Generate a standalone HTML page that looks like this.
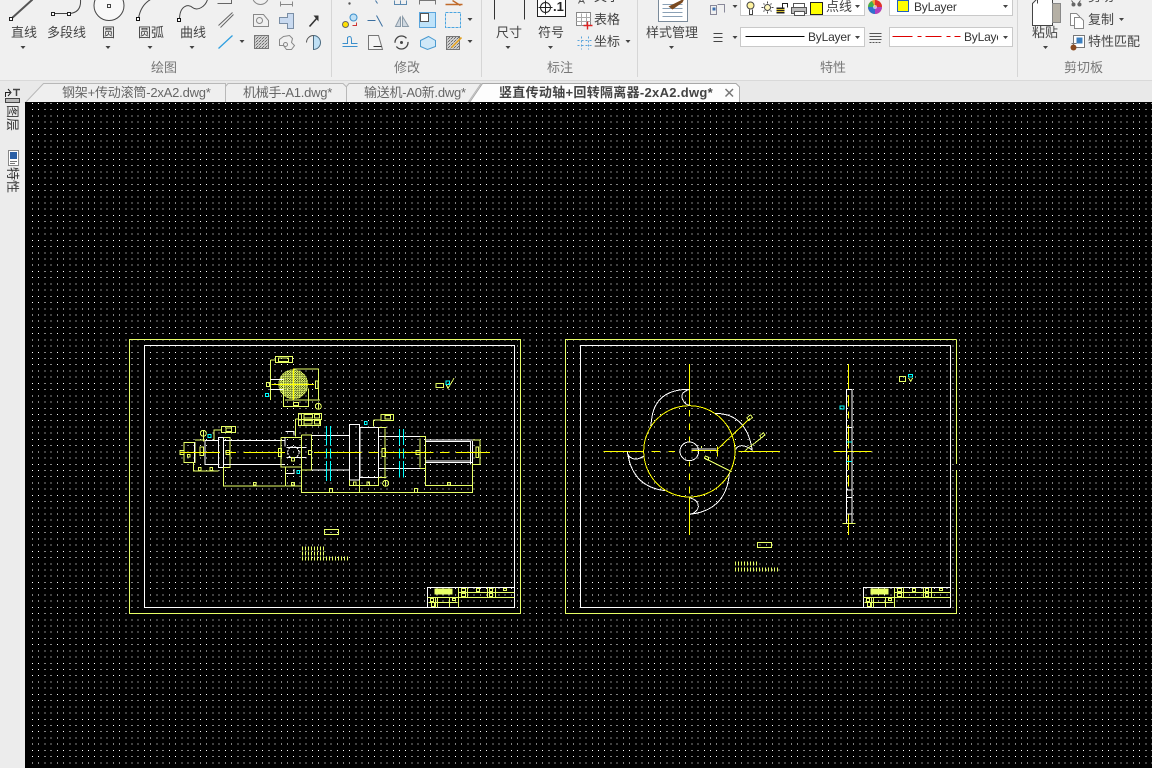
<!DOCTYPE html>
<html lang="zh"><head><meta charset="utf-8"><title>CAD</title>
<style>
html,body{margin:0;padding:0;width:1152px;height:768px;overflow:hidden;background:#f0f0f0}
body{position:relative;font-family:"Liberation Sans","Noto Sans CJK SC",sans-serif}
.t{position:absolute;white-space:nowrap;font-size:13px;line-height:16px;color:#444;z-index:5}
.s{color:#777}
.l{position:absolute;top:0;left:0}
.c{position:absolute;background:#fff;border:1px solid #c9c9c9;box-sizing:border-box}
.sep{position:absolute;top:0;width:1px;height:77px;background:#d6d6d6}
.y{position:absolute;white-space:nowrap;font-size:13px;line-height:14px;color:#333;transform-origin:0 0;transform:rotate(90deg)}
</style></head><body>
<div style="position:absolute;left:0;top:77px;width:1152px;height:3px;background:#f0f0f0;border-bottom:1px solid #d9d9d9"></div>
<div style="position:absolute;left:0;top:81px;width:1152px;height:22px;background:#e9e9e9"></div>
<div style="position:absolute;left:0;top:103px;width:25px;height:665px;background:#ececec"></div>
<div class="sep" style="left:331px"></div><div class="sep" style="left:481px"></div><div class="sep" style="left:637px"></div><div class="sep" style="left:1017px"></div>

<!-- combos -->
<div class="c" style="left:740px;top:-4px;width:125px;height:20px"></div>
<div class="c" style="left:889px;top:-4px;width:124px;height:20px"></div>
<div class="c" style="left:740px;top:27px;width:125px;height:20px"></div>
<div class="c" style="left:889px;top:27px;width:124px;height:20px"></div>

<svg class="l" width="1152" height="768" viewBox="0 0 1152 768" style="z-index:1">
<defs>
<pattern id="h" width="7" height="7" patternUnits="userSpaceOnUse"><path d="M-1 8L8 -1" stroke="#e8ff66" stroke-width="4.5"/></pattern>
<pattern id="g" width="3" height="3" patternUnits="userSpaceOnUse"><path d="M0 3L3 0" stroke="#666" stroke-width="1"/></pattern>
<g id="r1"><line x1="32" x2="1152" y1="0.5" y2="0.5" stroke="#fff" stroke-width="1" stroke-dasharray="1 5.22" shape-rendering="crispEdges"/></g>
<g id="r4"><use href="#r1"/><use href="#r1" y="6.22"/><use href="#r1" y="12.44"/><use href="#r1" y="18.66"/></g>
<g id="r16"><use href="#r4"/><use href="#r4" y="24.88"/><use href="#r4" y="49.76"/><use href="#r4" y="74.64"/></g>
<g id="r64"><use href="#r16"/><use href="#r16" y="99.52"/><use href="#r16" y="199.04"/><use href="#r16" y="298.56"/></g>
<g id="tb" fill="none" shape-rendering="crispEdges">
<path d="M0 20V0H87" stroke="#fff"/>
<path d="M31 5H87M0 10H87M31 0V20M40 0V10M60 0V10M68 0V10M1 15H30M8 10V20M10 10V20M22 10V20" stroke="#e8ff66"/>
<rect x="34" y="1" width="4" height="3" stroke="#e8ff66"/><rect x="34" y="6" width="4" height="3" stroke="#e8ff66"/>
<rect x="49" y="1" width="3" height="3" stroke="#e8ff66"/><rect x="62" y="1" width="3" height="3" stroke="#e8ff66"/><rect x="62" y="6" width="3" height="3" stroke="#e8ff66"/><rect x="76" y="1" width="3" height="2" stroke="#e8ff66"/>
<rect x="3" y="11" width="3" height="3" stroke="#e8ff66"/><rect x="4" y="15" width="3" height="4" stroke="#e8ff66"/><rect x="25" y="11" width="3" height="2" stroke="#e8ff66"/>
<rect x="7" y="1" width="18" height="6" fill="#e8ff66" stroke="none"/>
</g>
</defs>

<!-- canvas -->
<rect x="25" y="103" width="1127" height="665" fill="#000"/>
<g transform="translate(0 103)"><use href="#r64"/><use href="#r16" y="398.08"/><use href="#r16" y="497.6"/><use href="#r4" y="597.12"/><use href="#r4" y="622"/><use href="#r1" y="646.88"/><use href="#r1" y="653.1"/><use href="#r1" y="659.32"/></g>

<!-- frames -->
<g fill="none" shape-rendering="crispEdges">
<rect x="129.5" y="339.5" width="391" height="274" stroke="#e8ff66"/>
<rect x="144.5" y="345.5" width="370" height="262" stroke="#fff"/>
<path d="M956.500 339.500V464M956.500 470V613.500H565.500V339.500H956.500" stroke="#e8ff66"/>
<rect x="580.5" y="345.5" width="370" height="262" stroke="#fff"/>
</g>
<use href="#tb" x="427.5" y="587.5"/><use href="#tb" x="863.5" y="587.5"/>

<!-- notes -->
<g fill="none" stroke="#e8ff66" shape-rendering="crispEdges">
<rect x="324.5" y="529.5" width="14" height="5"/>
<path d="M302 548.500H324M302 553.500H326M302 558.500H349" stroke-width="4" stroke-dasharray="1 2"/>
<rect x="757.5" y="542.5" width="14" height="5"/>
<path d="M735 563.500H759M735 569.500H778" stroke-width="4" stroke-dasharray="1 2"/>
</g>

<!-- left drawing -->
<g transform="translate(170 345) scale(.33333)" fill="none" stroke-width="3" stroke="#e8ff66" shape-rendering="crispEdges">
<circle cx="370" cy="118" r="45" fill="url(#h)" stroke="none"/>
<path d="M302 45V165M302 45H316M370 72H445V165M345 165H450M340 100V185H415V130M289 112h10v12h-10zM370 172h16v10h-16zM436 108h8v22h-8z"/>
<rect x="316" y="35" width="52" height="17"/><rect x="326" y="39" width="30" height="10"/>
<circle cx="445" cy="184" r="9"/><path d="M445 176V192"/>
<path d="M302 103H340M302 133H340" stroke="#fff"/>
<path d="M370 70V165M305 118H432" stroke="#ff0"/>
<rect x="386" y="205" width="68" height="18"/><rect x="386" y="223" width="66" height="19"/><path d="M394 205V242M402 205V242"/><rect x="402" y="209" width="26" height="10"/><rect x="402" y="227" width="24" height="10"/><rect x="434" y="209" width="14" height="10"/><rect x="434" y="227" width="14" height="10"/>
<path d="M376 222V275M376 222H386"/>
<rect x="42" y="293" width="33" height="59"/><rect x="30" y="316" width="12" height="12"/><rect x="52" y="328" width="8" height="8"/><rect x="90" y="306" width="10" height="26"/>
<path d="M73 293V352M105 287V358H145V287H105" stroke="#fff"/>
<path d="M70 352V378H145M75 285H105"/><rect x="85" y="367" width="8" height="10"/><rect x="120" y="367" width="8" height="10"/>
<path d="M145 277H160V367H145Z" stroke="#fff"/><path d="M160 277H180V367H160V423H345M132 285V255H155"/>
<path d="M160 287H345M160 358H345" stroke="#fff"/>
<rect x="168" y="316" width="10" height="12"/>
<rect x="155" y="245" width="42" height="18"/><rect x="168" y="249" width="16" height="10"/>
<circle cx="100" cy="265" r="9"/><path d="M100 257V290"/>
<path d="M333 278H395M333 278V366H395M347 366V423M347 423H394"/>
<path d="M345 278V305M350 308H410M350 338H410M347 260H372V272M347 385H372V372" stroke="#fff"/>
<circle cx="370" cy="322" r="17" stroke="#fff" stroke-dasharray="6 3"/>
<rect x="325" y="310" width="10" height="24"/><rect x="415" y="316" width="10" height="12"/><rect x="365" y="338" width="8" height="10"/><rect x="365" y="412" width="8" height="8"/><rect x="250" y="412" width="8" height="8"/>
<path d="M394 270V442H908V355M394 270H425V375H394"/>
<path d="M425 272H538M425 375H538M538 238H568V405H538ZM570 247H625V397H570ZM627 275H750M627 370H750" stroke="#fff"/>
<path d="M538 405V422H568M568 405V442M625 247H650M645 250V400M625 397H650M625 397V422H568M610 225H633M610 225V245"/>
<rect x="550" y="411" width="8" height="10"/><rect x="591" y="411" width="8" height="10"/><rect x="636" y="310" width="10" height="25"/>
<circle cx="647" cy="415" r="9"/><path d="M647 405V425"/>
<rect x="633" y="208" width="37" height="19"/><rect x="645" y="212" width="16" height="10"/>
<path d="M750 274H767V370H750M750 280V368"/><rect x="738" y="316" width="12" height="12"/>
<path d="M767 285H908M767 290H902M767 348H902M767 352H908M902 288V358M908 288V355" stroke="#fff"/>
<path d="M908 285H930V358H908M767 370V422H908"/><rect x="918" y="306" width="8" height="32"/><rect x="832" y="412" width="10" height="8"/><rect x="478" y="430" width="10" height="12"/><rect x="733" y="430" width="10" height="12"/>
<rect x="798" y="115" width="22" height="13"/>
<path d="M828 118L834 130L852 100"/>
<path d="M30 322H150M170 322H198M220 322H345M432 322H575M597 322H625M640 322H790M810 322H838M858 322H960" stroke="#ff0"/>
<g stroke="#0ff"><path d="M469 243V302M469 310V340M469 348V408M481 243V302M481 310V340M481 348V408M688 252V300M688 310V340M688 348V398M700 252V300M700 310V340M700 348V398"/>
<rect x="286" y="145" width="9" height="10"/><rect x="114" y="268" width="9" height="9"/><rect x="381" y="376" width="8" height="10"/><rect x="583" y="229" width="8" height="10"/><rect x="828" y="108" width="11" height="10"/></g>
</g>

<!-- right drawing -->
<g transform="translate(590 350) scale(.33333)" fill="none" stroke-width="3" stroke="#ff0" shape-rendering="crispEdges">
<path d="M40 304H160M185 304H210M235 304H255M445 304H570M298 42V165M298 180V200M298 220V240M298 260V275M298 335V350M298 370V390M298 410V430M298 440V555"/>
<circle cx="298" cy="304" r="137"/>
<g stroke="#fff"><circle cx="298" cy="304" r="28"/>
<path d="M298 118Q200 118 186 200L182 228M298 118Q265 130 280 152Q286 165 298 165"/>
<path d="M375 190Q470 190 487 302M437 298Q450 275 487 300"/>
<path d="M300 493Q410 480 418 370M298 443Q325 450 325 470Q322 488 300 493"/>
<path d="M112 304Q125 410 225 422M112 310Q128 340 162 318"/>
<path d="M305 297H380"/></g>
<path d="M305 301H385M382 290V320M382 298L480 205"/>
<rect x="472" y="198" width="14" height="10" transform="rotate(-40 479 203)" stroke="#e8ff66"/>
<path d="M465 302L525 255M345 325L425 365M335 294V288" stroke="#e8ff66"/>
<rect x="510" y="252" width="14" height="8" transform="rotate(-40 517 256)" stroke="#e8ff66"/>
<rect x="344" y="320" width="12" height="8" transform="rotate(25 350 324)" stroke="#e8ff66"/>
<path d="M775 42V118M775 135V170M775 185V205M775 225V295M775 315V360M775 375V410M775 490V555M730 304H845"/>
<path d="M769 118H786V520H769ZM769 232H786M769 420H786M769 442H786M769 492H786" stroke="#fff"/>
<path d="M769 276H786M769 334H786" stroke="#0ff"/>
<path d="M757 520H797" stroke="#e8ff66"/>
<rect x="928" y="80" width="18" height="14" stroke="#e8ff66"/>
<path d="M956 84L962 94L968 84" stroke="#e8ff66"/>
<rect x="955" y="73" width="13" height="8" stroke="#0ff"/>
<rect x="750" y="168" width="12" height="9" stroke="#0ff"/>
</g>

<!-- tabs -->
<path d="M25.500 102.500L43.500 83.500H225.500V102.500Z" fill="#efefef" stroke="#b8b8b8"/>
<path d="M225.500 102.500V86.500L228 83.500H343L346.500 87V102.500Z" fill="#efefef" stroke="#b8b8b8"/>
<path d="M346.500 102.500V86.500L349 83.500H481L468 102.500Z" fill="#efefef" stroke="#b8b8b8"/>
<path d="M469.500 102.500L482.500 83.500H736L739.500 87V102.500Z" fill="#fdfdfd" stroke="#a8a8a8"/>
<rect x="25" y="102" width="1127" height="1" fill="#000"/>
<path d="M725.500 89L733 96.500M733 89L725.500 96.500" stroke="#777" stroke-width="1.5"/>

<!-- draw icons -->
<g fill="none" stroke="#444" transform="translate(.5 .5)">
<path d="M11 18L32 -1" stroke-width="2" stroke="#555"/><rect x="9" y="17" width="3" height="3" fill="#fff" stroke="#222"/>
<path d="M53 13H69Q81 12 80 -1"/><rect x="51" y="12" width="3" height="3" fill="#fff" stroke="#222"/><rect x="67" y="12" width="3" height="3" fill="#fff" stroke="#222"/>
<circle cx="108.500" cy="5" r="15" fill="#f8f8f8"/><rect x="107" y="4" width="3" height="3"/>
<path d="M138 18Q140 5 150 -1"/><rect x="136" y="17" width="3" height="3" fill="#fff" stroke="#111"/>
<path d="M179 19C179 5 188 3 192 7C197 11 205 6 207 -1"/><rect x="177" y="18" width="3" height="3" fill="#fff" stroke="#111"/>
<path d="M217 3H231V-2M218 25L232 12M220 27L233 14" stroke="#666"/>
<path d="M218 48L232 35" stroke="#2f9fe0" stroke-width="1.3"/>
<circle cx="260" cy="-4" r="8" stroke="#888"/>
<path d="M253 14H263L268 20V26H253Z" stroke="#888"/><circle cx="259" cy="20" r="3" stroke="#888"/>
<rect x="254" y="35" width="14" height="13" fill="url(#g)" stroke="#777"/>
<path d="M280 4H292M280 1V6M292 1V6" stroke="#888"/>
<path d="M279 17H287V13H293V28H287V23H279Z" stroke="#7a8ea5" fill="#c9daf0"/>
<path d="M283 36L289 35L292 38L291 42L294 45L291 49H286L283 45L279 45V39Z" stroke="#888"/><circle cx="285" cy="44" r="2" stroke="#888"/>
<path d="M309 26L317 17" stroke="#333" stroke-width="1.6"/><path d="M313 15H318V21Z" fill="#333" stroke="none"/>
<path d="M313 41V49A7 7 0 0 0 313 35Z" fill="#bfe0f5" stroke="#4a6a80"/><path d="M306 42A7 7 0 0 1 313 35" stroke="#555"/>
<circle cx="349" cy="3" r="1.2" fill="#555" stroke="none"/>
<circle cx="345" cy="24" r="3" fill="#ffe000" stroke="#666"/><circle cx="353" cy="17" r="3.500" fill="#bfe0f5" stroke="#3b8fcc"/><path d="M352 25H356V22" stroke="#c33"/>
<path d="M342 46H357M342 43H347V37Q351 34 351 40V43H357" stroke="#3b8fcc"/>
<path d="M375 0L377 3M367 20H375M376 15L382 26" stroke="#3b6fa0"/>
<path d="M368 35H378L382 49H368Z" fill="#f4f4f4" stroke="#777"/><path d="M373 46H381" stroke="#333"/>
<path d="M394 0V4H406V0M400 0V4" stroke="#5d8ab0"/>
<path d="M395 26L400 16V26ZM408 26L402 16V26Z" fill="#cfd8e0" stroke="#8a9aa8"/>
<circle cx="401" cy="42" r="6.500" stroke="#444" stroke-dasharray="16 4" stroke-width="1.3"/><circle cx="401" cy="42" r="1" fill="#444"/>
<path d="M419 4V0H435V4" stroke="#777"/>
<rect x="419" y="12" width="16" height="15" fill="#bfe3fa" stroke="#5aa5dc"/><rect x="420" y="13" width="8" height="8" fill="#fff" stroke="#555"/>
<path d="M420 40L428 36L435 40V46L427 49L420 46Z" fill="#cfe8f8" stroke="#4a9ad0"/>
<path d="M445 4H462M452 0L460 5" stroke="#c06a2a" stroke-width="1.4"/>
<rect x="445" y="12" width="15" height="15" stroke="#4aa5e0" stroke-dasharray="3 1"/>
<rect x="446" y="36" width="13" height="13" fill="url(#g)" stroke="#777"/><path d="M451 47L461 37" stroke="#e0a020" stroke-width="1.6"/>
<path d="M494 -1V19M524 -1V19" stroke="#333"/>
<rect x="537" y="-3" width="28" height="19" stroke="#222" fill="#fff"/><circle cx="545" cy="7" r="5" stroke="#222"/><path d="M545 0V14M538 7H552" stroke="#222"/>
<path d="M578 3L581 -3L584 3M579 1H583" stroke="#555"/>
<rect x="576" y="12" width="14" height="13" fill="#fff" stroke="#888"/><path d="M576 17H590M576 21H590M581 13V25M586 13V25" stroke="#aaa"/><path d="M583 25H592M587 21V29" stroke="#d22" stroke-width="1.4"/>
<path d="M581 36V49M588 36V49M577 40H592M577 45H592" stroke="#5aa5dc" stroke-dasharray="2 2"/>
<path d="M658 -1V21H687V-1" fill="#fff" stroke="#7a8a9a"/><path d="M662 4H682M662 8H682M662 12H682M662 16H682" stroke="#8aa0b5"/><path d="M668 6L684 -2L682 2L672 9Z" fill="#7a4a20" stroke="none"/>
<path d="M710 5H716V14H710ZM717 4H724V12" stroke="#889"/><rect x="712" y="7" width="3" height="3" fill="#3b6fb0" stroke="none"/>
<path d="M713 33H722M713 37H722M713 41H722" stroke="#444"/>
<circle cx="750" cy="5" r="3.500" fill="#fff3a0" stroke="#444"/><path d="M749 9V14H752V9" stroke="#444"/>
<circle cx="767" cy="7" r="3" stroke="#444" fill="#fff9c0"/><path d="M767 1V3M767 11V13M761 7H763M771 7H773M763 3L764 4M771 3L770 4M763 11L764 10M771 11L770 10" stroke="#444"/>
<rect x="776" y="7" width="8" height="6" fill="#222" stroke="none"/><path d="M782 7V3H787V7" stroke="#222"/><path d="M776 9H784M776 11H784" stroke="#d8c030"/>
<rect x="793" y="3" width="11" height="5" fill="#fff" stroke="#555"/><rect x="791" y="7" width="15" height="6" fill="#bbb" stroke="#555"/><rect x="794" y="11" width="10" height="4" fill="#fff" stroke="#555"/>
<rect x="810" y="2" width="12" height="12" fill="#ff0" stroke="#222"/>
<rect x="897" y="0" width="11" height="11" fill="#ff0" stroke="#2060c0"/>
<path d="M745 36H804" stroke="#000"/>
<path d="M892 36H912M917 36H921M925 36H941M946 36H950M954 36H960" stroke="#d00"/>
<path d="M869 33H881M869 36H881M869 39H881" stroke="#555"/><path d="M869 42H881" stroke="#555" stroke-dasharray="2 1"/>
<path d="M1032 25V3L1037 -2H1052V25Z" fill="#fff" stroke="#444"/><path d="M1052 3H1060V22H1052Z" fill="#b5b0a5" stroke="#888"/><path d="M1037 3V-2" stroke="#444"/>
<path d="M1071 0L1074 4M1080 0L1077 4" stroke="#555"/><circle cx="1073" cy="4" r="2" fill="#666" stroke="none"/><circle cx="1079" cy="4" r="2" fill="#666" stroke="none"/>
<path d="M1070 13H1076L1079 16V25H1070Z" fill="#fff" stroke="#888"/><path d="M1074 17H1080L1083 20V28H1074Z" fill="#fff" stroke="#888"/>
<rect x="1073" y="35" width="11" height="12" fill="#fff" stroke="#777"/><rect x="1076" y="37" width="6" height="6" fill="#3b7fc0" stroke="none"/><circle cx="1073" cy="47" r="3" fill="#8a4a20" stroke="none"/><path d="M1071 43H1076" stroke="#777"/>
</g>
<circle cx="875" cy="7" r="7" fill="#f0a030"/><path d="M875 7V0A7 7 0 0 1 882 7Z" fill="#e03030"/><path d="M875 7H882A7 7 0 0 1 875 14Z" fill="#b040c0"/><path d="M875 7V14A7 7 0 0 1 868 7Z" fill="#3070d0"/><path d="M875 7H868A7 7 0 0 1 872 1Z" fill="#40b050"/><circle cx="875" cy="7" r="2" fill="#fff" opacity=".6"/>

<!-- arrows -->
<g fill="#444"><path d="M20.500 46h5l-2.500 3zM105.500 46h5l-2.500 3zM147.500 46h5l-2.500 3zM189.500 46h5l-2.500 3zM239.500 40h5l-2.500 3zM467.500 18h5l-2.500 3zM467.500 40h5l-2.500 3zM505.500 46h5l-2.500 3zM548 46h5l-2.500 3zM625.500 40h5l-2.500 3zM669 46h5l-2.500 3zM732.500 5h5l-2.500 3zM732.500 36h5l-2.500 3zM855 5h5l-2.500 3zM855 36h5l-2.500 3zM1003 5h5l-2.500 3zM1003 36h5l-2.500 3zM1043 46h5l-2.500 3zM1119 18h5l-2.500 3z"/></g>

<!-- side panel icons -->
<path d="M5.500 97V92.500H10M8 89L11 92.500L8 96" fill="none" stroke="#222"/><path d="M13 89.500H20M16.500 89V96" fill="none" stroke="#444" stroke-width="1.5"/>
<rect x="5.5" y="98.5" width="14" height="4" fill="#bbb" stroke="#444"/>
<rect x="8.500" y="150.500" width="10" height="15" fill="#fff" stroke="#888"/><rect x="10" y="152" width="7" height="7" fill="#2a5fa5"/><path d="M10 161.500H17M10 163.500H15" stroke="#777"/>
</svg>

<!-- ribbon labels -->
<span class="t" style="left:11px;top:25px">直线</span>
<span class="t" style="left:47px;top:25px">多段线</span>
<span class="t" style="left:102px;top:25px">圆</span>
<span class="t" style="left:138px;top:25px">圆弧</span>
<span class="t" style="left:180px;top:25px">曲线</span>
<span class="t s" style="left:151px;top:60px">绘图</span>
<span class="t s" style="left:394px;top:60px">修改</span>
<span class="t s" style="left:547px;top:60px">标注</span>
<span class="t s" style="left:820px;top:60px">特性</span>
<span class="t s" style="left:1064px;top:60px">剪切板</span>
<span class="t" style="left:496px;top:25px">尺寸</span>
<span class="t" style="left:538px;top:25px">符号</span>
<span class="t" style="left:594px;top:-11px">文字</span>
<span class="t" style="left:594px;top:12px">表格</span>
<span class="t" style="left:594px;top:34px">坐标</span>
<span class="t" style="left:646px;top:25px">样式管理</span>
<span class="t" style="left:553px;top:-1px;font-weight:bold;color:#222">.1</span>
<span class="t" style="left:826px;top:-1px">点线</span>
<span class="t" style="left:914px;top:-1px;font-size:12px;color:#333;letter-spacing:-.2px">ByLayer</span>
<span class="t" style="left:808px;top:29px;font-size:12px;color:#333;letter-spacing:-.2px">ByLayer</span>
<span class="t" style="left:964px;top:29px;font-size:12px;color:#333;width:34px;overflow:hidden;letter-spacing:-.2px">ByLayer</span>
<span class="t" style="left:1032px;top:25px">粘贴</span>
<span class="t" style="left:1088px;top:-11px">剪切</span>
<span class="t" style="left:1088px;top:12px">复制</span>
<span class="t" style="left:1088px;top:34px">特性匹配</span>

<!-- tabs -->
<span class="t" style="left:62px;top:85px;color:#666;letter-spacing:-.2px">钢架+传动滚筒-2xA2.dwg*</span>
<span class="t" style="left:243px;top:85px;color:#666;letter-spacing:-.25px">机械手-A1.dwg*</span>
<span class="t" style="left:364px;top:85px;color:#666;letter-spacing:-.25px">输送机-A0新.dwg*</span>
<span class="t" style="left:499px;top:85px;font-weight:bold;color:#444;letter-spacing:.3px">竖直传动轴+回转隔离器-2xA2.dwg*</span>

<!-- side -->
<span class="y" style="left:19px;top:105px">图层</span>
<span class="y" style="left:19px;top:167px">特性</span>
</body></html>
